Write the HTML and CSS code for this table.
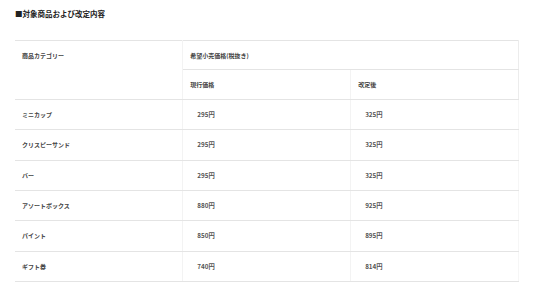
FILE: index.html
```html
<!DOCTYPE html>
<html lang="ja">
<head>
<meta charset="utf-8">
<link rel="stylesheet" href="styles.css">
</head>
<body>
<div class="page">
  <h2 class="title">■対象商品および改定内容</h2>
  <table class="price-table">
    <thead>
      <tr class="top">
        <th rowspan="2" class="cat">商品カテゴリー</th>
        <th colspan="2" class="group">希望小売価格(税抜き)</th>
      </tr>
      <tr class="sub">
        <th>現行価格</th>
        <th>改定後</th>
      </tr>
    </thead>
    <tbody>
      <tr><td>ミニカップ</td><td class="num">295円</td><td class="num">325円</td></tr>
      <tr><td>クリスピーサンド</td><td class="num">295円</td><td class="num">325円</td></tr>
      <tr><td>バー</td><td class="num">295円</td><td class="num">325円</td></tr>
      <tr><td>アソートボックス</td><td class="num">880円</td><td class="num">925円</td></tr>
      <tr><td>パイント</td><td class="num">850円</td><td class="num">895円</td></tr>
      <tr><td>ギフト券</td><td class="num">740円</td><td class="num">814円</td></tr>
    </tbody>
  </table>
</div>
</body>
</html>
```
FILE: styles.css
```css
html, body {
  margin: 0;
  padding: 0;
  background: #ffffff;
}
body {
  font-family: "Noto Sans CJK JP", "Noto Sans", sans-serif;
  color: #333333;
}
.page {
  width: 504px;
  padding: 8px 0 0 15px;
}
.title {
  margin: 0;
  font-size: 7.5px;
  line-height: 11px;
  font-weight: 700;
  color: #222222;
}
.price-table {
  margin-top: 21px;
  width: 504px;
  border-collapse: collapse;
  table-layout: fixed;
  font-size: 6px;
  color: #444444;
}
.price-table th,
.price-table td {
  height: 29.34px;
  padding: 0 7px;
  text-align: left;
  vertical-align: middle;
  border-top: 1px solid #e4e4e4;
  border-bottom: 1px solid #e4e4e4;
  border-left: 1px solid #f3f3f3;
  border-right: 1px solid #f3f3f3;
  font-weight: 700;
}
.price-table .top th {
  height: 28px;
}
.price-table .sub th {
  height: 29px;
}
.price-table th:first-child,
.price-table td:first-child {
  border-left: none;
}
.price-table .cat {
  vertical-align: top;
  padding-top: 10px;
}
.price-table .group {
  border-right: 1px solid #ececec;
}
.price-table .sub th:last-child {
  border-right: 1px solid #ececec;
}
.price-table td:last-child {
  border-right: 1px solid #f6f6f6;
}
.price-table .num {
  padding-left: 14px;
  font-size: 6.3px;
  font-weight: 700;
  color: #555555;
}
```
